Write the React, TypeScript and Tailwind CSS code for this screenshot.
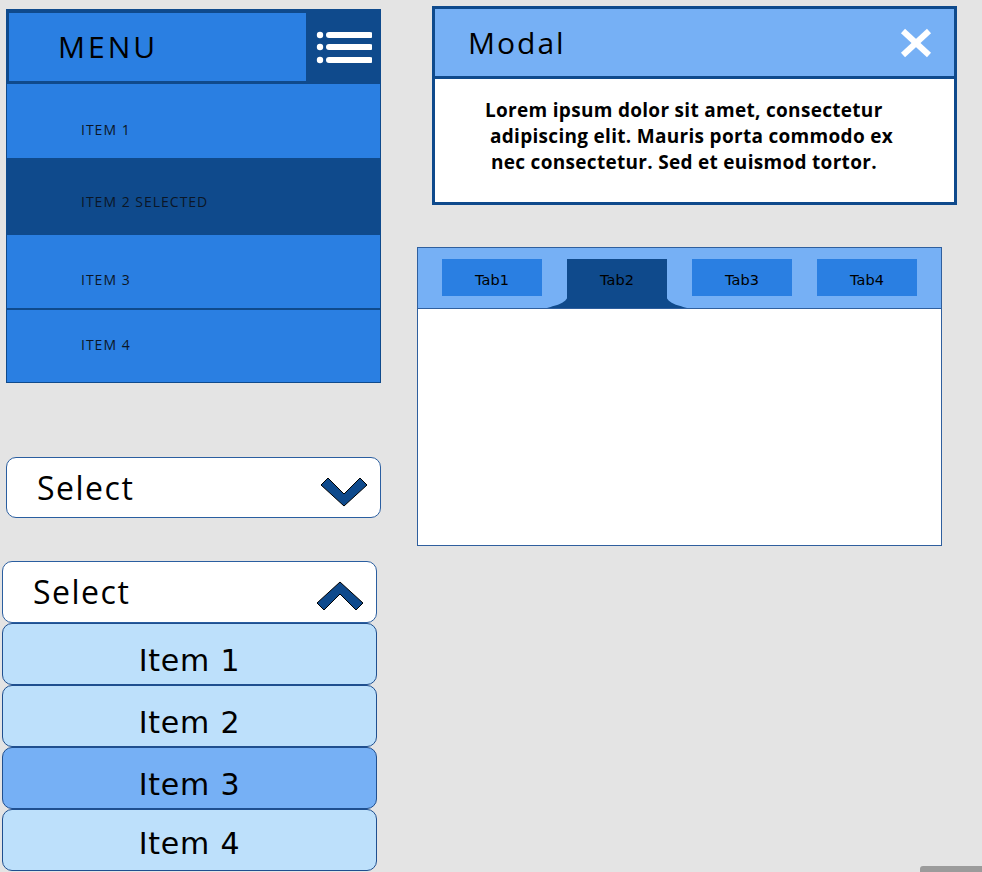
import React from "react"

const menuItems = [
    { label: "ITEM 1", height: "h-[74px]", pad: "pt-[37px]", selected: false, border: "" },
    { label: "ITEM 2 SELECTED", height: "h-[77px]", pad: "pt-[35px]", selected: true, border: "" },
    { label: "ITEM 3", height: "h-[73px]", pad: "pt-[36px]", selected: false, border: "" },
    { label: "ITEM 4", height: "h-[74px]", pad: "pt-[26px]", selected: false, border: "border-t-2 border-[#0f4a8c]" },
]

const listItems = [
    { label: "Item 1", active: false, pad: "pt-[14px]" },
    { label: "Item 2", active: false, pad: "pt-[14px]" },
    { label: "Item 3", active: true, pad: "pt-[14px]" },
    { label: "Item 4", active: false, pad: "pt-[8px]" },
]

const tabs = ["Tab1", "Tab2", "Tab3", "Tab4"]

function Chevron({ up }: { up?: boolean }) {
    return (
        <svg width="48" height="30" viewBox="0 0 48 30" className="mt-[8px]">
            <polygon
                points={up ? "1,22 8,29 24,13 40,29 47,22 24,1" : "1,8 8,1 24,17 40,1 47,8 24,29"}
                fill="#0f4a8c"
                stroke="#000"
                strokeWidth="1"
            />
        </svg>
    )
}

function Hamburger() {
    return (
        <svg width="56" height="34" viewBox="0 0 56 34">
            <circle cx="4" cy="4" r="3.2" fill="#fff" />
            <circle cx="4" cy="16" r="3.2" fill="#fff" />
            <circle cx="4" cy="29" r="3.2" fill="#fff" />
            <line x1="13" y1="4" x2="54" y2="4" stroke="#fff" strokeWidth="6" strokeLinecap="round" />
            <line x1="13" y1="16" x2="54" y2="16" stroke="#fff" strokeWidth="6" strokeLinecap="round" />
            <line x1="13" y1="29" x2="54" y2="29" stroke="#fff" strokeWidth="6" strokeLinecap="round" />
        </svg>
    )
}

function Flare({ side }: { side: "left" | "right" }) {
    return (
        <svg
            width="21"
            height="14"
            viewBox="0 0 21 14"
            className={`absolute bottom-0 ${side === "left" ? "-left-[20px]" : "-right-[20px] -scale-x-100"}`}
        >
            <path d="M21 0 C21 9 10 11 0 14 L21 14 Z" fill="#0f4a8c" />
        </svg>
    )
}

export default function App() {
    return (
        <div
            className="relative w-[982px] h-[872px] overflow-hidden bg-[#e4e4e4] flex gap-[36px]"
            style={{ fontFamily: "'Open Sans', 'Noto Sans', sans-serif" }}
        >
            {/* Left column */}
            <div className="w-[381px] shrink-0 flex flex-col">
                {/* Menu */}
                <div className="ml-[6px] mt-[9px] w-[375px] border border-[#0f4a8c] bg-[#2a7fe2]">
                    <div className="flex h-[74px] bg-[#0f4a8c]">
                        <div className="ml-[2px] mt-[3px] mb-[3px] w-[297px] bg-[#2a7fe2] flex items-center pl-[49px]">
                            <span className="text-[30px] tracking-[3px] text-black leading-none">MENU</span>
                        </div>
                        <div className="flex-1 flex items-center justify-center pl-[2px] pt-[1px]">
                            <Hamburger />
                        </div>
                    </div>
                    {menuItems.map((item) => (
                        <div
                            key={item.label}
                            className={`${item.height} ${item.pad} ${item.border} pl-[74px] ${item.selected ? "bg-[#0f4a8c]" : "bg-[#2a7fe2]"}`}
                        >
                            <span className="block text-[14px] leading-[18px] tracking-[1px] text-[#0b1626]">{item.label}</span>
                        </div>
                    ))}
                </div>

                {/* Closed select */}
                <div className="ml-[6px] mt-[74px] w-[375px] h-[61px] rounded-[10px] border border-[#2a5ea0] bg-white flex items-center justify-between pl-[30px] pr-[12px]">
                    <span className="text-[32px] tracking-[1.5px] text-black leading-none">Select</span>
                    <Chevron />
                </div>

                {/* Open select */}
                <div className="ml-[2px] mt-[43px] w-[375px] flex flex-col">
                    <div className="h-[62px] rounded-[10px] border border-[#2a5ea0] bg-white flex items-center justify-between pl-[30px] pr-[12px]">
                        <span className="text-[32px] tracking-[1.5px] text-black leading-none">Select</span>
                        <Chevron up />
                    </div>
                    {listItems.map((item) => (
                        <div
                            key={item.label}
                            className={`h-[62px] rounded-[10px] border border-[#1f4f8f] flex items-center justify-center ${item.pad} ${item.active ? "bg-[#76b0f5]" : "bg-[#bde0fb]"}`}
                        >
                            <span
                                className="text-[30px] leading-none text-black tracking-[0.8px]"
                                style={{ fontFamily: "'DejaVu Sans', Verdana, sans-serif" }}
                            >
                                {item.label}
                            </span>
                        </div>
                    ))}
                </div>
            </div>

            {/* Right column */}
            <div className="flex flex-col">
                {/* Modal */}
                <div className="ml-[15px] mt-[6px] w-[525px] h-[199px] border-[3px] border-[#0f4a8c] bg-white flex flex-col">
                    <div className="h-[67px] bg-[#76b0f5] border-b-[3px] border-[#0f4a8c] flex items-center justify-between pl-[33px] pr-[22px] box-content">
                        <span className="text-[30px] tracking-[2px] text-black leading-none">Modal</span>
                        <svg width="32" height="30" viewBox="0 0 32 30">
                            <line x1="3" y1="3" x2="29" y2="27" stroke="#fff" strokeWidth="6" />
                            <line x1="29" y1="3" x2="3" y2="27" stroke="#fff" strokeWidth="6" />
                        </svg>
                    </div>
                    <div className="pt-[18px] pl-[50px] text-[19px] leading-[26px] tracking-[0.3px] font-bold text-black whitespace-nowrap">
                        <div>Lorem ipsum dolor sit amet, consectetur</div>
                        <div className="pl-[5px]">adipiscing elit. Mauris porta commodo ex</div>
                        <div className="pl-[6px]">nec consectetur. Sed et euismod tortor.</div>
                    </div>
                </div>

                {/* Tabs */}
                <div className="mt-[42px] w-[525px] h-[299px] border border-[#2f5f9e] bg-white flex flex-col">
                    <div className="h-[61px] bg-[#76b0f5] border-b border-[#2f5f9e] flex items-start gap-[25px] pl-[24px] pt-[11px]">
                        {tabs.map((tab) => {
                            const active = tab === "Tab2"
                            return (
                                <div
                                    key={tab}
                                    className={`relative w-[100px] ${active ? "h-[49px] bg-[#0f4a8c]" : "h-[37px] bg-[#2a7fe2]"}`}
                                >
                                    <div
                                        className="h-[37px] flex items-center justify-center pt-[6px] text-[14.5px] text-black"
                                        style={{ fontFamily: "'DejaVu Sans', Verdana, sans-serif" }}
                                    >
                                        {tab}
                                    </div>
                                    {active && (
                                        <>
                                            <Flare side="left" />
                                            <Flare side="right" />
                                        </>
                                    )}
                                </div>
                            )
                        })}
                    </div>
                    <div className="flex-1" />
                </div>
            </div>

            {/* scrollbar sliver */}
            <div className="absolute bottom-0 right-0 w-[62px] h-[6px] bg-[#9b9b9b] rounded-tl-[3px]" />
        </div>
    )
}
